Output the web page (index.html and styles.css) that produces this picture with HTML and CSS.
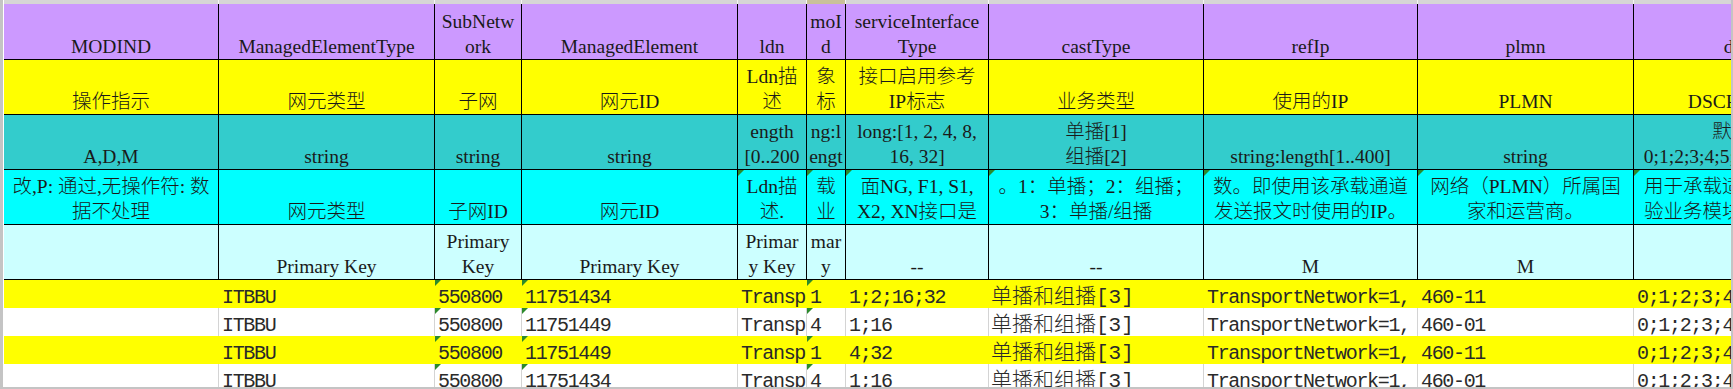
FILE: index.html
```html
<!DOCTYPE html>
<html lang="zh-CN">
<head>
<meta charset="utf-8">
<title>Sheet</title>
<link rel="stylesheet" href="styles.css">
</head>
<body>
<div class="frame">
  <div class="sheet">
    <div class="ch"></div><div class="ch"></div><div class="ch"></div><div class="ch"></div><div class="ch"></div>
    <div class="ch sel"></div><div class="ch"></div><div class="ch"></div><div class="ch"></div><div class="ch"></div><div class="ch"></div>

    <div class="h r1"><span>MODIND</span></div>
    <div class="h r1"><span>ManagedElementType</span></div>
    <div class="h r1"><span>SubNetw<br>ork</span></div>
    <div class="h r1"><span>ManagedElement</span></div>
    <div class="h r1"><span>ldn</span></div>
    <div class="h r1"><span>moI<br>d</span></div>
    <div class="h r1"><span>serviceInterface<br>Type</span></div>
    <div class="h r1"><span>castType</span></div>
    <div class="h r1"><span>refIp</span></div>
    <div class="h r1"><span>plmn</span></div>
    <div class="h r1"><span>dscp</span></div>

    <div class="h r2"><span>操作指示</span></div>
    <div class="h r2"><span>网元类型</span></div>
    <div class="h r2"><span>子网</span></div>
    <div class="h r2"><span>网元ID</span></div>
    <div class="h r2"><span>Ldn描<br>述</span></div>
    <div class="h r2"><span>象<br>标</span></div>
    <div class="h r2"><span>接口启用参考<br>IP标志</span></div>
    <div class="h r2"><span>业务类型</span></div>
    <div class="h r2"><span>使用的IP</span></div>
    <div class="h r2"><span>PLMN</span></div>
    <div class="h r2"><span>DSCP值列表</span></div>

    <div class="h r3"><span>A,D,M</span></div>
    <div class="h r3"><span>string</span></div>
    <div class="h r3"><span>string</span></div>
    <div class="h r3"><span>string</span></div>
    <div class="h r3"><span>ength<br>[0..200</span></div>
    <div class="h r3"><span>ng:l<br>engt</span></div>
    <div class="h r3"><span>long:[1, 2, 4, 8,<br>16, 32]</span></div>
    <div class="h r3"><span>单播[1]<br>组播[2]</span></div>
    <div class="h r3"><span>string:length[1..400]</span></div>
    <div class="h r3"><span>string</span></div>
    <div class="h r3"><span>默认值<br>0;1;2;3;4;5;6;7;8;9;10;11</span></div>

    <div class="h r4"><span>改,P: 通过,无操作符: 数<br>据不处理</span></div>
    <div class="h r4"><span>网元类型</span></div>
    <div class="h r4"><span>子网ID</span></div>
    <div class="h r4"><span>网元ID</span></div>
    <div class="h r4 tri"><span>Ldn描<br>述.</span></div>
    <div class="h r4 tri"><span>载<br>业</span></div>
    <div class="h r4 tri"><span>面NG, F1, S1,<br>X2, XN接口是</span></div>
    <div class="h r4 tri"><span>。1：单播；2：组播；<br>3：单播/组播</span></div>
    <div class="h r4 tri"><span>数。即使用该承载通道<br>发送报文时使用的IP。</span></div>
    <div class="h r4 tri"><span>网络（PLMN）所属国<br>家和运营商。</span></div>
    <div class="h r4 tri"><span>用于承载适配层业务检<br>验业务模块的优先级。</span></div>

    <div class="h r5"><span></span></div>
    <div class="h r5"><span>Primary Key</span></div>
    <div class="h r5"><span>Primary<br>Key</span></div>
    <div class="h r5"><span>Primary Key</span></div>
    <div class="h r5"><span>Primar<br>y Key</span></div>
    <div class="h r5"><span>mar<br>y</span></div>
    <div class="h r5"><span>--</span></div>
    <div class="h r5"><span>--</span></div>
    <div class="h r5"><span>M</span></div>
    <div class="h r5"><span>M</span></div>
    <div class="h r5"><span></span></div>

    <div class="d dy"></div>
    <div class="d dy">ITBBU</div>
    <div class="d dy tri">550800</div>
    <div class="d dy tri">11751434</div>
    <div class="d dy">Transp</div>
    <div class="d dy tri">1</div>
    <div class="d dy">1;2;16;32</div>
    <div class="d dy cjk">单播和组播[3]</div>
    <div class="d dy">TransportNetwork=1,</div>
    <div class="d dy">460-11</div>
    <div class="d dy">0;1;2;3;4</div>

    <div class="d dw"></div>
    <div class="d dw">ITBBU</div>
    <div class="d dw tri">550800</div>
    <div class="d dw tri">11751449</div>
    <div class="d dw">Transp</div>
    <div class="d dw tri">4</div>
    <div class="d dw">1;16</div>
    <div class="d dw cjk">单播和组播[3]</div>
    <div class="d dw">TransportNetwork=1,</div>
    <div class="d dw">460-01</div>
    <div class="d dw">0;1;2;3;4</div>

    <div class="d dy"></div>
    <div class="d dy">ITBBU</div>
    <div class="d dy tri">550800</div>
    <div class="d dy tri">11751449</div>
    <div class="d dy">Transp</div>
    <div class="d dy tri">1</div>
    <div class="d dy">4;32</div>
    <div class="d dy cjk">单播和组播[3]</div>
    <div class="d dy">TransportNetwork=1,</div>
    <div class="d dy">460-11</div>
    <div class="d dy">0;1;2;3;4</div>

    <div class="d dw"></div>
    <div class="d dw">ITBBU</div>
    <div class="d dw tri">550800</div>
    <div class="d dw tri">11751434</div>
    <div class="d dw">Transp</div>
    <div class="d dw tri">4</div>
    <div class="d dw">1;16</div>
    <div class="d dw cjk">单播和组播[3]</div>
    <div class="d dw">TransportNetwork=1,</div>
    <div class="d dw">460-01</div>
    <div class="d dw">0;1;2;3;4</div>
  </div>
</div>
</body>
</html>
```
FILE: styles.css
```css
html, body {
  margin: 0;
  padding: 0;
}
body {
  background: #c4c4c4;
  height: 389px;
  overflow: hidden;
}
.frame {
  margin: 0 2px 0 3px;
  height: 387px;
  overflow: hidden;
  background: #ffffff;
}
.sheet {
  display: grid;
  grid-template-columns: 215px 216px 87px 216px 69px 39px 143px 215px 214px 216px 216px;
  grid-template-rows: 4px 56px 55px 55px 55px 55px 28px 28px 28px 28px;
  border-left: 1px solid #ffffff;
  width: max-content;
}
.ch {
  background: #d6d6d6;
  border-right: 1px solid #f4f4f4;
  box-sizing: border-box;
}
.ch.sel {
  background: #c9c09a;
}
.h {
  box-sizing: border-box;
  border-right: 1px solid #000;
  border-bottom: 1px solid #000;
  display: flex;
  flex-direction: column;
  justify-content: flex-end;
  align-items: center;
  overflow: hidden;
  position: relative;
  font-family: "Liberation Serif", "Noto Sans CJK SC", serif;
  font-size: 19.5px;
  font-weight: 300;
  line-height: 25px;
  color: #1a1a1a;
  text-align: center;
  white-space: nowrap;
}
.h span {
  display: block;
}
.r1 { background: #cc99ff; }
.r2 { background: #ffff00; }
.r3 { background: #33cccc; }
.r4 { background: #00ffff; }
.r5 { background: #ccffff; }

.d {
  box-sizing: border-box;
  display: flex;
  align-items: flex-end;
  overflow: hidden;
  position: relative;
  white-space: nowrap;
  padding-left: 3px;
  font-family: "Liberation Mono", "Noto Sans CJK SC", monospace;
  font-size: 20px;
  font-weight: 300;
  letter-spacing: -1.33px;
  line-height: 20px;
  color: #2a2a2a;
  border-right: 1px solid #d4d4d4;
}
.d.cjk {
  font-size: 21px;
  letter-spacing: 0;
  padding-left: 2px;
}
.dy {
  background: #ffff00;
  border-right-color: #ffff00;
}
.dw {
  background: #ffffff;
}
.tri::before {
  content: "";
  position: absolute;
  left: 0;
  top: 0;
  border-top: 6px solid #2c8a2c;
  border-right: 6px solid transparent;
}
```
